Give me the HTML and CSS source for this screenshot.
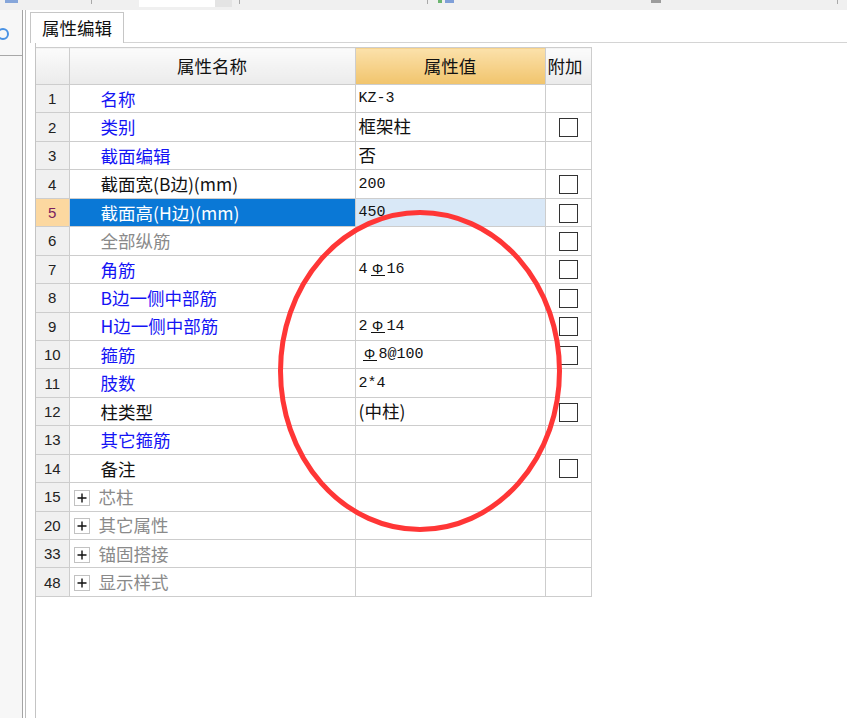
FILE: index.html
```html
<!DOCTYPE html>
<html lang="zh-CN">
<head>
<meta charset="utf-8">
<title>属性编辑</title>
<link rel="stylesheet" href="styles.css">
</head>
<body>
<div class="topstrip">
  <span class="ts-ico"></span>
  <span class="ts-sep s1"></span>
  <span class="ts-field"><span class="ts-drop"></span></span>
  <span class="ts-sep s2"></span>
  <span class="ts-sep s3"></span>
  <span class="ts-green"></span>
  <span class="ts-blue"></span>
  <span class="ts-gray"></span>
  <span class="ts-sep s4"></span>
</div>
<div class="main">
  <aside class="side">
    <span class="side-ring"></span>
    <div class="side-sep"></div>
  </aside>
  <section class="content">
    <div class="tabbar"><div class="tab">属性编辑</div></div>
    <div class="panel">
      <table class="grid">
        <colgroup><col class="c-num"><col class="c-name"><col class="c-val"><col class="c-extra"></colgroup>
        <thead>
          <tr><th class="h-num"></th><th class="h-name">属性名称</th><th class="h-val">属性值</th><th class="h-extra">附加</th></tr>
        </thead>
        <tbody>
          <tr><td class="n">1</td><td class="nm blue">名称</td><td class="v">KZ-3</td><td class="x"></td></tr>
          <tr><td class="n">2</td><td class="nm blue">类别</td><td class="v"><span class="cj">框架柱</span></td><td class="x"><span class="cb"></span></td></tr>
          <tr><td class="n">3</td><td class="nm blue">截面编辑</td><td class="v"><span class="cj">否</span></td><td class="x"></td></tr>
          <tr><td class="n">4</td><td class="nm black">截面宽(B边)(mm)</td><td class="v">200</td><td class="x"><span class="cb"></span></td></tr>
          <tr><td class="n sel">5</td><td class="nm sel">截面高(H边)(mm)</td><td class="v sel">450</td><td class="x"><span class="cb"></span></td></tr>
          <tr><td class="n">6</td><td class="nm gray">全部纵筋</td><td class="v"></td><td class="x"><span class="cb"></span></td></tr>
          <tr><td class="n">7</td><td class="nm blue">角筋</td><td class="v">4<span class="rebar">Φ</span>16</td><td class="x"><span class="cb"></span></td></tr>
          <tr><td class="n">8</td><td class="nm blue">B边一侧中部筋</td><td class="v"></td><td class="x"><span class="cb"></span></td></tr>
          <tr><td class="n">9</td><td class="nm blue">H边一侧中部筋</td><td class="v">2<span class="rebar">Φ</span>14</td><td class="x"><span class="cb"></span></td></tr>
          <tr><td class="n">10</td><td class="nm blue">箍筋</td><td class="v"><span class="rebar lead">Φ</span>8@100</td><td class="x"><span class="cb"></span></td></tr>
          <tr><td class="n">11</td><td class="nm blue">肢数</td><td class="v">2*4</td><td class="x"></td></tr>
          <tr><td class="n">12</td><td class="nm black">柱类型</td><td class="v"><span class="cj">(中柱)</span></td><td class="x"><span class="cb"></span></td></tr>
          <tr><td class="n">13</td><td class="nm blue">其它箍筋</td><td class="v"></td><td class="x"></td></tr>
          <tr><td class="n">14</td><td class="nm black">备注</td><td class="v"></td><td class="x"><span class="cb"></span></td></tr>
          <tr><td class="n">15</td><td class="nm grp gray"><svg class="plus" viewBox="0 0 16 16"><rect x="0.5" y="0.5" width="15" height="15" fill="#fff" stroke="#c2c2c2"/><path d="M3.5 8h9M8 3.5v9" stroke="#111" stroke-width="1.4"/></svg>芯柱</td><td class="v"></td><td class="x"></td></tr>
          <tr><td class="n">20</td><td class="nm grp gray"><svg class="plus" viewBox="0 0 16 16"><rect x="0.5" y="0.5" width="15" height="15" fill="#fff" stroke="#c2c2c2"/><path d="M3.5 8h9M8 3.5v9" stroke="#111" stroke-width="1.4"/></svg>其它属性</td><td class="v"></td><td class="x"></td></tr>
          <tr><td class="n">33</td><td class="nm grp gray"><svg class="plus" viewBox="0 0 16 16"><rect x="0.5" y="0.5" width="15" height="15" fill="#fff" stroke="#c2c2c2"/><path d="M3.5 8h9M8 3.5v9" stroke="#111" stroke-width="1.4"/></svg>锚固搭接</td><td class="v"></td><td class="x"></td></tr>
          <tr><td class="n">48</td><td class="nm grp gray"><svg class="plus" viewBox="0 0 16 16"><rect x="0.5" y="0.5" width="15" height="15" fill="#fff" stroke="#c2c2c2"/><path d="M3.5 8h9M8 3.5v9" stroke="#111" stroke-width="1.4"/></svg>显示样式</td><td class="v"></td><td class="x"></td></tr>
        </tbody>
      </table>
    </div>
  </section>
</div>
<svg class="annot" viewBox="0 0 847 718" width="847" height="718">
  <ellipse cx="420" cy="371" rx="139.5" ry="158.5" fill="none" stroke="#ff3636" stroke-width="5"/>
</svg>
</body>
</html>
```
FILE: styles.css
```css
* { box-sizing: border-box; }

body {
  margin: 0;
  width: 847px;
  height: 718px;
  overflow: hidden;
  position: relative;
  background: #fff;
  font-family: "Noto Sans CJK SC", "Liberation Sans", sans-serif;
  color: #111;
}

/* top toolbar remnant */
.topstrip {
  height: 10px;
  background: #f0f0f0;
  display: flex;
  align-items: flex-start;
}
.ts-ico { width: 13px; height: 3px; margin-left: 5px; background: #86a6da; }
.ts-sep { width: 1px; height: 4px; background: #a9a9a9; }
.s1 { margin-left: 73px; }
.s2 { margin-left: 7px; }
.s3 { margin-left: 187px; }
.s4 { margin-left: 176px; }
.ts-field {
  width: 93px; height: 7px; margin-left: 47px;
  background: #fff; display: flex; justify-content: flex-end;
}
.ts-drop { width: 17px; height: 7px; background: #e4e4e4; }
.ts-green { width: 4px; height: 3px; margin-left: 10px; background: #6cb56f; }
.ts-blue { width: 9px; height: 3px; margin-left: 3px; background: #7f9fd8; }
.ts-gray { width: 10px; height: 3px; margin-left: 197px; background: #9c9c9c; }

.main {
  display: flex;
  height: 708px;
}

.side {
  flex: none;
  width: 23px;
  background: #f7f7f7;
  border-right: 1px solid #a4a4a4;
  overflow: hidden;
}
.side-ring {
  display: block;
  width: 12px;
  height: 12px;
  margin: 18px 0 0 -3px;
  border: 2.5px solid #4a92e4;
  border-radius: 50%;
}
.side-sep {
  height: 1px;
  margin-top: 15px;
  background: #a8a8a8;
}

.content {
  flex: 1;
  margin-left: 2px;
  border-left: 1px solid #bcbcbc;
  display: flex;
  flex-direction: column;
}

.tabbar {
  margin: 2px 0 0 4px;
  height: 31px;
  display: flex;
  align-items: flex-end;
  border-bottom: 1px solid #d4d4d4;
}
.tab {
  height: 31px;
  margin-bottom: -1px;
  padding: 0 11px;
  border: 1px solid #c6c6c6;
  border-bottom: none;
  background: #fff;
  font-size: 17.5px;
  line-height: 29px;
  color: #111;
}

.panel {
  flex: 1;
  margin-left: 9px;
  border-left: 1px solid #c4c4c4;
  padding-top: 4px;
}

.grid {
  border-collapse: collapse;
  table-layout: fixed;
  width: 555px;
}
.c-num { width: 33px; }
.c-name { width: 286px; }
.c-val { width: 190px; }
.c-extra { width: 46px; }

.grid th,
.grid td {
  border: 1px solid #cdcdcd;
  padding: 0;
  line-height: 1;
  vertical-align: middle;
  white-space: nowrap;
  overflow: hidden;
}
.grid th:first-child,
.grid td:first-child { border-left: none; }

.grid th {
  height: 37px;
  font-weight: normal;
  font-size: 17.5px;
  color: #111;
}
.grid td { height: 28.44px; }

.h-num, .h-name, .h-extra {
  background: linear-gradient(#fbfbfb, #ebebeb);
}
.h-val {
  background: linear-gradient(#fbe1ab, #f1c46c);
  color: #7a1f6a;
}
.grid th.h-extra { text-align: left; padding-left: 2px; }

.grid td.n {
  background: #f0f0f0;
  text-align: center;
  font-family: "Liberation Sans", sans-serif;
  font-size: 15px;
  color: #222;
}
.grid td.n.sel { background: #fcd8a0; color: #7a1f5e; }

.grid td.nm {
  padding-left: 31px;
  font-size: 17.5px;
}
.blue { color: #1414f5; }
.gray { color: #8a8a8a; }
.black { color: #111; }
.grid td.nm.sel { background: #0a78d6; color: #fff; }

.grid td.grp { padding-left: 4px; }
.plus {
  width: 16px;
  height: 16px;
  margin-right: 9px;
  vertical-align: -2px;
}

.grid td.v {
  padding-left: 3px;
  font-family: "Liberation Mono", "Noto Sans CJK SC", monospace;
  font-size: 15px;
  color: #111;
}
.grid td.v.sel { background: #d9e8f7; }
.cj {
  font-family: "Noto Sans CJK SC", sans-serif;
  font-size: 17.5px;
}
.rebar {
  display: inline-block;
  width: 14px;
  margin: 0 2px 0 3px;
  font-family: "Liberation Sans", sans-serif;
  font-size: 14px;
  line-height: 12px;
  text-align: center;
  border-bottom: 1px solid #111;
  vertical-align: -1px;
}
.rebar.lead { margin-left: 4px; }

.grid td.x { text-align: center; }
.cb {
  display: inline-block;
  width: 19px;
  height: 19px;
  border: 1px solid #333;
  background: #fff;
  vertical-align: middle;
}

.annot {
  position: absolute;
  left: 0;
  top: 0;
  pointer-events: none;
}
```
